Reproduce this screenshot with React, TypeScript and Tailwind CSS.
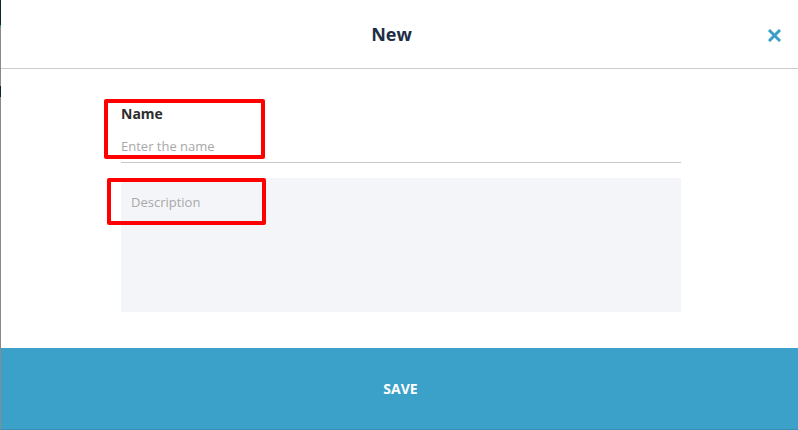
import React from "react";

export default function App() {
  return (
    <div
      className="relative w-[798px] h-[430px] bg-white overflow-hidden flex"
      style={{ fontFamily: '"Open Sans", "Noto Sans", sans-serif' }}
    >
      {/* backdrop edge */}
      <div className="w-px h-full flex flex-col shrink-0">
        <div className="h-[25px] bg-[#10222e]" />
        <div className="h-[2px] bg-[#3a8a8a]" />
        <div className="h-[59px] bg-[#8a8a8a]" />
        <div className="h-[11px] bg-[#10222e]" />
        <div className="flex-1 bg-[#8a8a8a]" />
      </div>
      <div className="flex-1 flex flex-col">
        <div className="relative h-[69px] border-b border-[#cccccc] flex items-center justify-center pr-[16px] shrink-0">
          <span className="text-[18px] font-bold text-[#1d2f45] leading-none">New</span>
          <svg
            className="absolute right-[17px] top-[29px]"
            width="13"
            height="13"
            viewBox="0 0 13 13"
          >
            <path d="M2 2 L11 11 M11 2 L2 11" stroke="#3a9fc6" strokeWidth="3" strokeLinecap="square" />
          </svg>
        </div>
        <div className="flex-1 flex flex-col pl-[120px] pt-[35px]">
          <div className="w-[560px] flex flex-col">
            <div className="text-[14px] font-bold text-[#2d2d2d] leading-[20px]">Name</div>
            <div className="h-[39px] border-b border-[#c8c8c8] flex items-end pb-[6px]">
              <span className="text-[13px] text-[#a8a8a8] leading-[20px]">Enter the name</span>
            </div>
            <div className="mt-[15px] h-[134px] bg-[#f4f5f9] px-[10px] pt-[13px] leading-[20px]">
              <span className="text-[13px] text-[#a8a8a8] leading-[20px]">Description</span>
            </div>
          </div>
        </div>
        <div className="h-[82px] bg-[#3ba1c8] border-b border-[#3590b5] flex items-center justify-center pl-[2px] shrink-0">
          <span className="text-[14px] font-bold text-white">SAVE</span>
        </div>
      </div>
      {/* annotation boxes */}
      <div className="absolute left-[104px] top-[99px] w-[161px] h-[60px] border-4 border-[#ff0000] rounded-[2px]" />
      <div className="absolute left-[107px] top-[178px] w-[159px] h-[47px] border-4 border-[#ff0000] rounded-[2px]" />
    </div>
  );
}
